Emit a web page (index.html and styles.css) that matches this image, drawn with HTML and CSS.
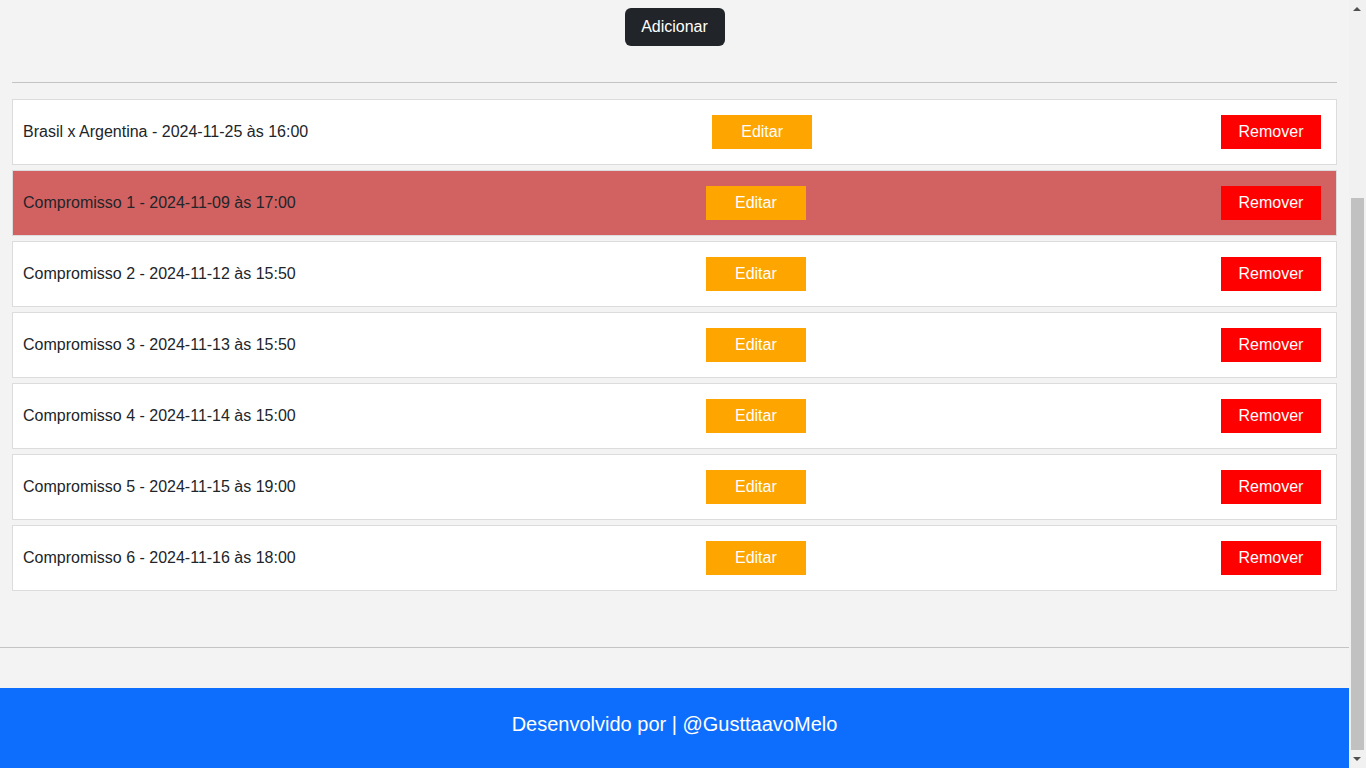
FILE: index.html
```html
<!DOCTYPE html>
<html lang="pt-BR">
<head>
<meta charset="utf-8">
<title>Agenda de Compromissos</title>
<link rel="stylesheet" href="styles.css">
</head>
<body>
<div class="page">
  <main class="container">
    <div class="actions">
      <button class="btn-add" type="button">Adicionar</button>
    </div>
    <hr class="divider">
    <ul class="list">
      <li class="item"><span class="item-text">Brasil x Argentina - 2024-11-25 às 16:00</span><button class="btn-edit">Editar</button><button class="btn-remove">Remover</button></li>
      <li class="item item-alert"><span class="item-text">Compromisso 1 - 2024-11-09 às 17:00</span><button class="btn-edit">Editar</button><button class="btn-remove">Remover</button></li>
      <li class="item"><span class="item-text">Compromisso 2 - 2024-11-12 às 15:50</span><button class="btn-edit">Editar</button><button class="btn-remove">Remover</button></li>
      <li class="item"><span class="item-text">Compromisso 3 - 2024-11-13 às 15:50</span><button class="btn-edit">Editar</button><button class="btn-remove">Remover</button></li>
      <li class="item"><span class="item-text">Compromisso 4 - 2024-11-14 às 15:00</span><button class="btn-edit">Editar</button><button class="btn-remove">Remover</button></li>
      <li class="item"><span class="item-text">Compromisso 5 - 2024-11-15 às 19:00</span><button class="btn-edit">Editar</button><button class="btn-remove">Remover</button></li>
      <li class="item"><span class="item-text">Compromisso 6 - 2024-11-16 às 18:00</span><button class="btn-edit">Editar</button><button class="btn-remove">Remover</button></li>
    </ul>
  </main>
  <hr class="rule">
  <footer class="footer">Desenvolvido por | @GusttaavoMelo</footer>
</div>
<div class="scrollbar" aria-hidden="true">
  <span class="arrow-up"></span>
  <span class="thumb"></span>
  <span class="arrow-down"></span>
</div>
</body>
</html>
```
FILE: styles.css
```css
body {
  margin: 0;
  background: #f3f3f3;
  font-family: "Liberation Sans", Arial, sans-serif;
  color: #212529;
  overflow: hidden;
}
.page {
  margin-right: 17px;
  height: 768px;
  display: flex;
  flex-direction: column;
}
.container {
  padding: 8px 12px 0;
}
.actions {
  display: flex;
  justify-content: center;
}
.btn-add {
  width: 100px;
  height: 38px;
  background: #212529;
  color: #fff;
  border: none;
  border-radius: 6px;
  font-family: inherit;
  font-size: 16px;
  padding: 0;
}
.divider {
  margin: 36px 0 0;
  border: none;
  border-top: 1px solid #c4c4c4;
  height: 0;
}
.list {
  list-style: none;
  margin: 16px 0 0;
  padding: 0;
  display: flex;
  flex-direction: column;
  gap: 5px;
}
.item {
  display: flex;
  align-items: center;
  justify-content: space-between;
  background: #fff;
  border: 1px solid #dcdcdc;
  padding: 15px 15px 15px 10px;
  font-size: 16px;
}
.item-alert {
  background: #d26262;
}
.btn-edit,
.btn-remove {
  width: 100px;
  height: 34px;
  border: none;
  color: #fff;
  font-family: inherit;
  font-size: 16px;
  padding: 0;
}
.btn-edit {
  background: #ffa500;
}
.btn-remove {
  background: #ff0000;
  margin-left: 5px;
}
.rule {
  margin: 56px 0 0;
  border: none;
  border-top: 1px solid #c4c4c4;
  height: 0;
}
.footer {
  margin-top: 40px;
  height: 80px;
  flex-shrink: 0;
  box-sizing: border-box;
  padding-bottom: 8px;
  background: #0d6efd;
  color: #fff;
  display: flex;
  align-items: center;
  justify-content: center;
  font-size: 20px;
}
.scrollbar {
  position: fixed;
  top: 0;
  right: 0;
  width: 17px;
  height: 768px;
  background: #f1f1f1;
}
.arrow-up,
.arrow-down {
  position: absolute;
  left: 4px;
  width: 0;
  height: 0;
  border-left: 4px solid transparent;
  border-right: 4px solid transparent;
}
.arrow-up {
  top: 7px;
  border-bottom: 4px solid #505050;
}
.arrow-down {
  bottom: 7px;
  border-top: 4px solid #505050;
}
.thumb {
  position: absolute;
  left: 2px;
  width: 13px;
  top: 198px;
  height: 552px;
  background: #c1c1c1;
}
```
